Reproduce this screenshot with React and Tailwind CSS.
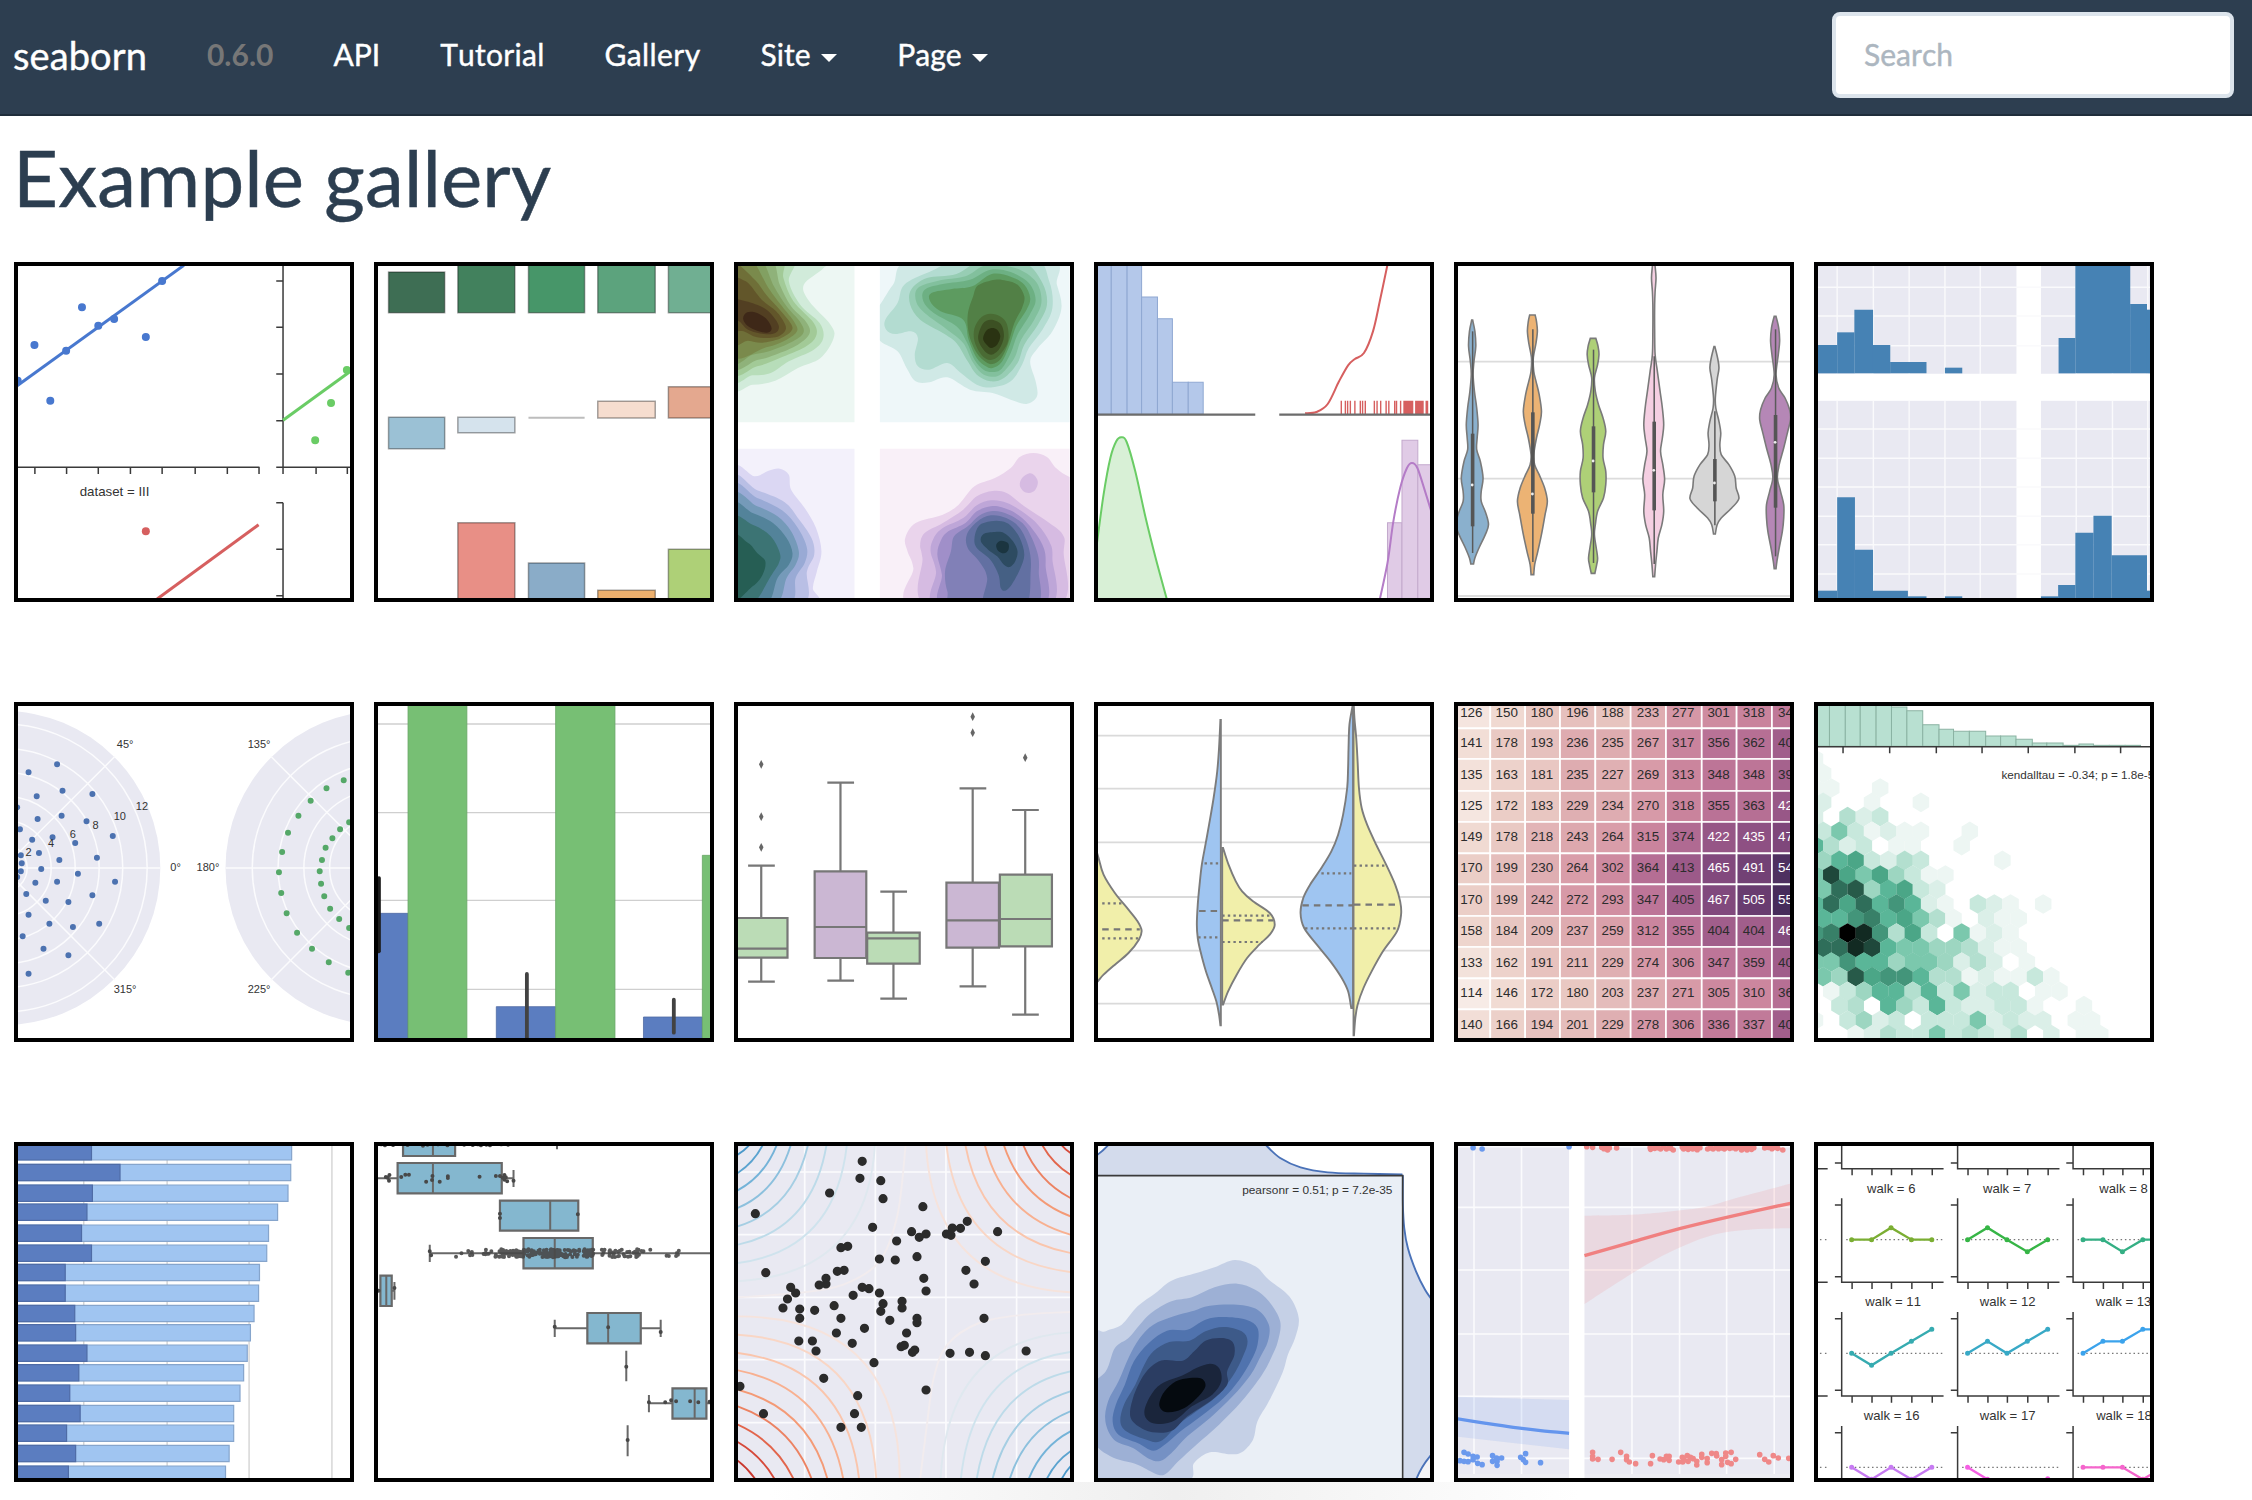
import React from "react";

/* Plot space: 733.2 x 996 units per 332px tile. Left-hand tiles start at x=17.7, right-hand ones at x=812.7. */
const SX = 2.2085;
const SY = 3;

function smooth(p, closed) {
  const n = p.length;
  const at = (i) => (closed ? p[(i + n) % n] : p[Math.max(0, Math.min(n - 1, i))]);
  let d = `M${p[0][0]} ${p[0][1]}`;
  const last = closed ? n : n - 1;
  for (let i = 0; i < last; i++) {
    const a = at(i - 1), b = at(i), c = at(i + 1), e = at(i + 2);
    d += `C${(b[0] + (c[0] - a[0]) / 6).toFixed(1)} ${(b[1] + (c[1] - a[1]) / 6).toFixed(1)} ${(c[0] - (e[0] - b[0]) / 6).toFixed(1)} ${(c[1] - (e[1] - b[1]) / 6).toFixed(1)} ${c[0]} ${c[1]}`;
  }
  return closed ? d + "Z" : d;
}
const pairs = (s) => s.trim().split(/\s+/).map((t) => t.split(",").map(Number));

const Path = ({ d, s = "none", w = 1.5, f = "none", ...r }) => (
  <path d={d} stroke={s} strokeWidth={w} fill={f} vectorEffect="non-scaling-stroke" {...r} />
);
const L = ({ x1, y1, x2, y2, ...r }) => <Path d={`M${x1} ${y1}L${x2} ${y2}`} {...r} />;
const Curve = ({ p, closed, ...r }) => <Path d={smooth(pairs(p), closed)} {...r} />;
const R = ({ x, y, x2, y2, ...r }) => <Path d={`M${x} ${y}H${x2}V${y2}H${x}Z`} {...r} />;
const Dots = ({ p, c, w = 8, o = 1 }) => (
  <Path d={pairs(p).map((q) => `M${q[0]} ${q[1]}h.01`).join("")} s={c} w={w} strokeLinecap="round" opacity={o} />
);
const T = ({ x, y, s = 13, w, c = "#333", children }) => (
  <text
    transform={`translate(${x} ${y}) scale(${SX} ${SY})`}
    fontSize={s}
    fill={c}
    textLength={w ? w / SX : undefined}
    lengthAdjust="spacingAndGlyphs"
    fontFamily='"Liberation Sans", Arial, sans-serif'
  >
    {children}
  </text>
);
const V = ({ xs, a = 22, b = 1022, ...r }) => <Path d={xs.map((x) => `M${x} ${a}V${b}`).join("")} {...r} />;
const H = ({ ys, a = 10, b = 760, ...r }) => <Path d={ys.map((y) => `M${a} ${y}H${b}`).join("")} {...r} />;

function Tile({ right, children }) {
  return (
    <a className="block h-[340px] w-[340px] overflow-hidden border-4 border-black bg-white">
      <svg className="block h-[332px] w-[332px]" viewBox={`${right ? 812.7 : 17.7} 24 733.2 996`} preserveAspectRatio="none">
        {children}
      </svg>
    </a>
  );
}

const AX = "#3a3a3a";

function Anscombe() {
  return (
    <Tile>
      <Path s={AX} d="M10 628H551M603 22V628H760M603 734V1030" />
      <V xs={[55, 125, 195, 266, 336, 409, 480, 550, 603, 676, 745]} a={628} b={648} s={AX} />
      <H ys={[69, 208, 348, 488, 628, 734, 874, 1013]} a={588} b={603} s={AX} />
      <L x1={10} y1={389} x2={384} y2={22} s="#4878cf" w={3} />
      <Dots c="#4878cf" p="17,368 54,261 89,428 124,278 159,148 195,203 230,183 300,237 336,69" />
      <L x1={603} y1={487} x2={752} y2={340} s="#6acc65" w={3} />
      <Dots c="#6acc65" p="744,336 709,435 674,547" />
      <L x1={325} y1={1023} x2={549} y2={800} s="#d65f5f" w={3} />
      <Dots c="#d65f5f" p="300,820" />
      <T x={154} y={713} w={154}>dataset = III</T>
    </Tile>
  );
}

function ColorBars() {
  const b = [
    [836, 42, 960, 164, "#3e6e54"], [989, 10, 1115, 164, "#42815d"], [1145, 10, 1269, 164, "#479669"], [1298, 10, 1425, 164, "#5ca37d"], [1454, 10, 1570, 164, "#70af92"],
    [836, 478, 960, 572, "#9bc1d5"], [989, 478, 1115, 524, "#d5e3ed"], [1298, 430, 1425, 480, "#f6ddcf"], [1454, 386, 1570, 480, "#e4a88f"],
    [989, 794, 1115, 1040, "#e88f86"], [1145, 915, 1269, 1040, "#8aacc8"], [1298, 997, 1425, 1040, "#ecb06e"], [1454, 874, 1570, 1040, "#aed077"],
  ];
  return (
    <Tile right>
      {b.map((r, i) => <R key={i} x={r[0]} y={r[1]} x2={r[2]} y2={r[3]} f={r[4]} s="#000" strokeOpacity={0.35} w={1.5} />)}
      <L x1={1145} y1={479} x2={1269} y2={479} s="#bdbdbd" w={2} />
    </Tile>
  );
}

const kde = [
  { box: [10, 10, 275, 493], bg: "#edf7f3", lv: [
    ["#d1ebda", "10,0 215,0 205,32 163,80 175,130 222,200 229,240 200,300 150,330 100,368 50,380 0,370"],
    ["#b7ddb9", "0,0 137,0 130,70 155,140 198,195 206,240 185,275 130,310 90,345 50,352 0,348"],
    ["#a2ca97", "0,0 112,0 118,60 140,130 185,195 190,235 165,268 110,300 60,325 0,330"],
    ["#8fb27a", "0,0 88,0 110,80 135,145 167,190 176,225 150,260 100,290 60,306 0,315"],
    ["#82a062", "0,0 65,0 97,85 125,145 155,192 162,225 135,253 90,278 50,290 0,300"],
    ["#7a8a4c", "0,0 45,0 85,90 115,145 142,192 148,220 125,245 80,268 0,285"],
    ["#6f6f38", "0,0 20,20 58,70 80,110 110,155 135,198 135,220 110,242 70,254 40,248 0,245"],
    ["#62562a", "0,70 35,70 70,125 102,160 122,200 120,222 100,238 60,238 30,220 0,205"],
    ["#523f22", "0,125 35,130 75,150 95,175 108,205 100,225 75,228 40,215 20,190 0,180"],
    ["#3e2818", "29,182 38,163 60,165 82,185 92,212 82,224 60,218 40,205"],
  ] },
  { box: [331, 10, 750, 493], bg: "#eef7f9", lv: [
    ["#d0e9e6", "410,0 360,80 331,140 300,190 331,248 370,280 390,330 410,370 440,373 480,358 530,395 580,405 620,425 655,438 678,415 675,370 663,310 680,270 712,220 732,150 722,80 700,0"],
    ["#b3dcd1", "520,0 440,42 385,80 370,135 343,185 345,215 365,228 400,220 415,240 408,290 415,325 440,335 480,315 510,345 545,380 580,388 620,370 645,320 660,270 690,215 712,150 705,70 670,0"],
    ["#97cdb4", "560,5 500,48 435,60 400,95 398,140 420,185 470,225 500,255 525,310 545,350 575,370 605,360 635,315 650,260 680,200 700,140 690,75 650,15"],
    ["#82c09d", "565,22 520,55 460,68 415,90 411,130 430,165 480,215 515,255 535,310 555,345 578,356 600,347 628,300 643,245 672,185 688,130 675,70 630,30"],
    ["#6db083", "575,35 530,65 470,78 430,95 427,130 450,165 500,205 522,250 540,305 560,335 580,342 600,332 620,285 635,230 662,170 675,125 660,75 620,42"],
    ["#5d9b60", "578,48 535,85 490,93 445,105 442,130 465,160 515,185 527,245 545,300 565,325 580,330 600,312 618,260 632,205 655,155 663,120 650,80 620,56"],
    ["#528046", "585,65 548,82 537,115 525,170 528,230 545,285 565,312 580,318 598,303 614,258 628,195 645,150 650,115 635,80 610,68"],
    ["#4a6b34", "575,167 555,178 540,210 540,250 555,290 575,306 595,292 614,250 612,200 598,176"],
    ["#3c5023", "576,185 558,198 548,240 560,275 577,290 595,272 605,235 598,198"],
    ["#2a3312", "577,210 565,220 559,243 568,262 577,270 590,260 597,235 590,215"],
  ] },
  { box: [10, 572, 275, 1030], bg: "#f3f1fb", lv: [
    ["#dbd7f3", "0,648 55,655 85,638 110,632 130,650 135,695 165,750 190,810 202,880 192,940 183,990 187,1040 0,1060"],
    ["#b9bfe5", "0,672 60,697 120,732 150,780 180,840 186,890 170,940 160,1040 0,1060"],
    ["#99aad5", "0,695 60,720 115,757 150,810 170,870 165,915 145,960 130,1040 0,1060"],
    ["#759ab9", "0,720 60,745 105,775 135,820 152,880 145,920 125,960 100,1040 0,1060"],
    ["#53839a", "0,750 50,765 95,795 125,840 138,885 130,920 105,960 80,1040 0,1060"],
    ["#3c7474", "0,790 50,800 90,835 110,885 108,915 90,955 50,1040 0,1060"],
    ["#265e54", "0,835 40,855 60,885 78,910 72,950 50,985 0,1025"],
  ] },
  { box: [331, 572, 750, 1030], bg: "#f9f0f8", lv: [
    ["#ead4ec", "790,670 750,657 720,630 700,597 670,585 640,597 620,630 585,660 540,685 505,740 470,770 410,795 387,840 392,880 405,930 412,1050 790,1050"],
    ["#d6bbe2", "580,699 545,715 515,755 470,795 430,825 420,860 425,900 440,1050 720,1050 737,880 735,830 700,790 650,745 612,706"],
    ["#d6bbe2", "661,646 645,660 640,682 648,700 661,705 674,696 680,672 672,652"],
    ["#bea6d8", "577,727 545,742 515,780 470,810 450,840 443,880 455,940 460,1050 700,1050 712,900 705,850 680,800 650,765 612,735"],
    ["#a08fc9", "576,745 545,760 520,795 480,822 465,850 458,890 468,950 474,1050 685,1050 697,920 690,860 660,800 630,765 600,748"],
    ["#8180b7", "576,760 550,773 525,805 495,835 488,880 475,940 480,1000 500,1050 670,1050 682,940 678,880 655,810 630,780 600,762"],
    ["#6270a2", "576,772 545,792 523,830 525,870 550,910 568,960 562,1050 650,1050 664,940 660,870 640,810 610,780"],
    ["#456084", "576,790 550,803 540,840 545,870 575,905 593,950 598,990 608,998 622,980 640,935 650,890 640,840 620,803 600,790"],
    ["#2d4b61", "585,822 560,828 554,850 570,875 590,895 605,920 618,927 630,910 635,880 625,850 605,825"],
    ["#1b3540", "598,848 588,860 592,878 605,886 615,875 614,855"],
  ] },
];

function CubehelixKde() {
  return (
    <Tile>
      {kde.map((k, i) => (
        <g key={i} clipPath={`url(#kde-clip-${i})`}>
          <clipPath id={`kde-clip-${i}`}>
            <path d={`M${k.box[0]} ${k.box[1]}H${k.box[2]}V${k.box[3]}H${k.box[0]}Z`} />
          </clipPath>
          <rect x="0" y="0" width="800" height="1040" fill={k.bg} />
          {k.lv.map((l, j) => <Curve key={j} closed p={l[1]} f={l[0]} />)}
        </g>
      ))}
    </Tile>
  );
}

function Distplot() {
  const e = [805, 842, 877, 909, 944, 977, 1012, 1045];
  const t = [10, 10, 10, 117, 182, 373, 373];
  return (
    <Tile right>
      {t.map((y, i) => <R key={i} x={e[i]} y={y} x2={e[i + 1]} y2={469} f="#b4c8ea" s="#8fa8d2" w={1} />)}
      <Curve p="1270,466 1295,462 1320,438 1345,370 1365,322 1380,303 1400,285 1420,220 1435,130 1452,20" s="#d65f5f" w={2} />
      <V xs={[1350, 1359, 1364, 1370, 1380, 1392, 1397, 1403, 1423, 1429, 1437, 1449, 1455, 1468, 1472, 1481]} a={428} b={468} s="#d65f5f" w={1.4} />
      <Path d="M1487 428H1509V468H1487ZM1513 428H1532V468H1513ZM1536 428H1542V468H1536Z" f="#d65f5f" />
      <Path d="M805 470H1160M1213 470H1560" s="#6c6c6c" w={2.4} />
      <Path d={smooth(pairs("810,860 825,710 840,600 853,550 864,538 876,552 895,640 918,780 940,900 966,1030")) + "L800 1030Z"} f="#d8f0d6" s="#6acc65" w={2} />
      <R x={1452} y={794} x2={1484} y2={1030} f="#e0cbe6" s="#c3a9cd" w={1} />
      <R x={1484} y={547} x2={1519} y2={1030} f="#e0cbe6" s="#c3a9cd" w={1} />
      <R x={1519} y={620} x2={1560} y2={1030} f="#e0cbe6" s="#c3a9cd" w={1} />
      <Curve p="1434,1030 1452,915 1465,790 1480,690 1495,630 1506,615 1518,630 1535,700 1552,775" s="#b47cc7" w={2} />
    </Tile>
  );
}

const violins = [
  [49, "#8ab0cd", "186,1 220,6 265,8 310,4 350,2 400,5 450,10 500,13 540,11 575,10 610,18 660,24 700,20 730,20 765,30 800,36 830,29 870,15 900,6 918,3", 527, 805, 220, 885, 681],
  [182, "#ecb374", "171,6 190,9 220,11 255,8 300,2 340,3 370,8 410,15 460,20 500,16 540,9 590,3 620,5 650,15 690,27 730,33 770,28 830,20 880,12 920,5 950,3", 463, 767, 214, 912, 708],
  [316, "#aed077", "241,6 265,11 290,13 320,10 360,3 400,5 440,12 480,22 520,28 560,23 600,22 640,28 680,28 720,23 760,10 800,5 830,3 870,7 900,10 920,8 946,4", 505, 703, 275, 915, 609],
  [450, "#f5cfe2", "0,1 25,3 60,5 100,3 140,2 220,2 290,3 340,8 400,14 450,19 500,22 540,19 580,15 620,20 665,24 710,20 760,22 800,18 840,10 880,7 920,4 956,2", 491, 757, 295, 918, 637],
  [584, "#d6d6d6", "266,1 300,7 330,10 365,6 420,2 450,3 490,10 525,14 560,12 590,15 620,32 655,45 690,48 722,54 750,38 780,15 800,6 828,2", 603, 730, 460, 802, 675],
  [718, "#b587b6", "175,2 210,8 250,10 290,7 350,2 390,8 420,22 455,32 485,34 520,28 570,19 620,9 660,5 700,12 740,19 780,19 820,16 870,9 910,4 932,2", 471, 749, 214, 895, 553],
];

function Violins() {
  return (
    <Tile>
      <H ys={[311, 662, 1014]} s="#dcdcdc" w={1.8} />
      {violins.map((v, i) => {
        const p = pairs(v[2]);
        const l = p.map((q) => [v[0] - q[1], q[0]]);
        const r = p.map((q) => [v[0] + q[1], q[0]]).reverse();
        return (
          <g key={i}>
            <Path d={smooth(l) + "L" + smooth(r).slice(1) + "Z"} f={v[1]} s="#7a7a7a" w={1.6} />
            <V xs={[v[0] + 1]} a={v[5]} b={v[6]} s="#5a5a5a" w={1.5} />
            <V xs={[v[0] + 1]} a={v[3]} b={v[4]} s="#555" w={3.6} />
            <Dots p={`${v[0]},${v[7]}`} c="#eee" w={2.8} />
          </g>
        );
      })}
    </Tile>
  );
}

function FacetHist() {
  const bars = [
    [805, 855, 261, 346], [855, 893, 223, 346], [893, 934, 155, 346], [934, 972, 261, 346], [972, 1052, 312, 346], [1093, 1131, 329, 346],
    [1344, 1381, 240, 346], [1381, 1502, 10, 346], [1502, 1539, 138, 346], [1539, 1560, 155, 346],
    [805, 855, 998, 1030], [855, 894, 718, 1030], [894, 934, 875, 1030], [934, 1011, 998, 1030], [1011, 1052, 1015, 1030], [1093, 1131, 1015, 1030],
    [1305, 1343, 1015, 1030], [1343, 1381, 981, 1030], [1381, 1421, 824, 1030], [1421, 1461, 773, 1030], [1461, 1539, 892, 1030], [1539, 1560, 998, 1030],
  ];
  return (
    <Tile right>
      <Path f="#e9e9f2" d="M805 10H1251V347H805ZM1305 10H1560V347H1305ZM805 428H1251V1030H805ZM1305 428H1560V1030H1305Z" />
      <V xs={[855, 935, 1014, 1093, 1171, 1383, 1463, 1541]} s="#fafafc" w={1.4} />
      <H ys={[88, 174, 263, 513, 601, 687, 775, 860, 948]} a={805} b={1560} s="#fafafc" w={1.5} />
      <R x={805} y={348} x2={1560} y2={427} f="#fff" />
      {bars.map((b, i) => <R key={i} x={b[0]} y={b[2]} x2={b[1] + 0.3} y2={b[3]} f="#4682b4" />)}
    </Tile>
  );
}

function Polar() {
  const ring = (cx, r, extra) => (
    <ellipse key={cx + "-" + r} cx={cx} cy="510" rx={r} ry={(r * SY) / SX} vectorEffect="non-scaling-stroke" {...extra} />
  );
  const g = { fill: "none", stroke: "#fbfbfd", strokeWidth: 1.5 };
  return (
    <Tile>
      {ring(-15, 347, { fill: "#e9e9f2" })}
      {ring(823, 347, { fill: "#e9e9f2" })}
      {[53, 106, 159, 212, 264, 318].map((r) => ring(-15, r, g))}
      {[58, 117, 174, 231, 288].map((r) => ring(823, r, g))}
      <Path s="#fbfbfd" w={1.5} d="M-15 510H332M476 510H823M-15 510L232 175M-15 510L232 847M823 510L576 175M823 510L576 847" />
      <Dots c="#4c72b0" w={6} p="104,199 41,223 116,278 182,288 59,295 16,328 61,363 114,353 169,370 227,414 22,394 49,425 94,418 144,435 24,472 64,465 192,479 109,486 26,496 24,520 69,513 150,527 232,551 104,551 56,554 16,537 36,588 79,608 129,612 182,592 41,650 87,677 139,687 197,677 28,715 74,752 129,772 41,827" />
      <Dots c="#55a868" w={6} p="737,247 699,271 664,308 637,353 614,404 601,462 594,523 599,585 611,646 634,704 667,752 704,793 747,824 749,373 729,394 712,421 697,449 689,486 684,520 687,557 694,595 707,632 727,663 749,690" />
      <T x={236} y={151} s={11}>45°</T>
      <T x={525} y={151} s={11}>135°</T>
      <T x={354} y={520} s={11}>0°</T>
      <T x={412} y={520} s={11}>180°</T>
      <T x={229} y={885} s={11}>315°</T>
      <T x={525} y={885} s={11}>225°</T>
      {[[34, 475, 2], [84, 446, 4], [132, 420, 6], [182, 393, 8], [229, 366, 10], [278, 335, 12]].map((t) => (
        <T key={t[2]} x={t[0]} y={t[1]} s={11}>{t[2]}</T>
      ))}
    </Tile>
  );
}

function Barplot() {
  return (
    <Tile right>
      <H ys={[78, 344, 607, 874]} a={805} b={1560} s="#cfcfcf" w={1.4} />
      {[[805, 879, 646], [1074, 1205, 926], [1399, 1529, 957]].map((b) => <R key={b[0]} x={b[0]} y={b[2]} x2={b[1]} y2={1030} f="#5b7dc0" s="#4f6ba3" w={0.8} />)}
      {[[879, 1009, 10], [1205, 1336, 10], [1529, 1570, 472]].map((b) => <R key={b[0]} x={b[0]} y={b[2]} x2={b[1]} y2={1030} f="#77bf74" s="#68a666" w={0.8} />)}
      <Path d="M815 540V760" s="#1d1d1d" w={3.6} strokeLinecap="round" />
      <Path d="M1141.5 828V1040M1466 905V1004" s="#424242" w={3.8} strokeLinecap="round" />
    </Tile>
  );
}

function Boxplots() {
  const b = [
    [5, 127, 660, 779, 752, 503, 851, 69, "#bbdcb6"], [187, 301, 520, 780, 687, 254, 848, 244, "#cbb7d3"], [303, 419, 704, 797, 721, 581, 902, 361, "#bbdcb6"],
    [478, 594, 554, 749, 667, 271, 865, 536, "#cbb7d3"], [596, 711, 530, 745, 663, 336, 950, 652, "#bbdcb6"],
  ];
  return (
    <Tile>
      {b.map((q, i) => (
        <g key={i}>
          <Path s="#777" w={2.2} d={`M${q[7]} ${q[5]}V${q[6]}M${q[7] - 29} ${q[5]}h59M${q[7] - 29} ${q[6]}h59`} />
          <R x={q[0]} y={q[2]} x2={q[1]} y2={q[3]} f={q[8]} s="#777" w={2.2} />
          <L x1={q[0]} y1={q[4]} x2={q[1]} y2={q[4]} s="#777" w={2.2} />
        </g>
      ))}
      {pairs("69,199 69,356 69,448 536,56 536,104 652,179").map((q, i) => (
        <Path key={i} d={`M${q[0]} ${q[1] - 13}l5 13l-5 13l-5 -13Z`} f="#666" />
      ))}
    </Tile>
  );
}

function SplitViolins() {
  const half = (c, s, sign, f) => {
    const p = pairs(s).map((q) => [c + sign * q[1], q[0]]);
    return <Path d={`M${c} ${p[0][1]}L${smooth(p).slice(1)}L${c} ${p[p.length - 1][1]}Z`} f={f} s="#7c7c7c" w={1.9} />;
  };
  const B = "#9fc5f1", Y = "#f1efaa";
  return (
    <Tile right>
      <H ys={[113, 272, 433, 597, 758, 917]} a={805} b={1560} s="#dadada" w={1.8} />
      <Path d={smooth(pairs("805,440 814,480 825,530 850,585 880,635 900,670 909,698 903,725 880,765 850,800 825,830 814,847 800,870"))} f={Y} s="#7c7c7c" w={1.9} />
      {half(1084, "66,1 150,4 220,8 300,16 380,26 440,34 500,42 560,47 620,51 680,53 720,51 760,45 820,33 870,20 910,10 950,4 982,1", -1, B)}
      {half(1087, "450,2 500,14 550,30 580,44 610,68 645,105 680,116 710,105 740,82 780,55 830,32 880,13 920,2", 1, Y)}
      {half(1376, "0,0 22,1 80,8 150,10 210,11 270,13 350,22 410,33 460,48 510,70 560,95 600,110 645,116 690,108 740,80 790,50 840,25 880,11 930,4", -1, B)}
      {half(1377, "0,0 60,2 120,6 190,9 270,12 330,18 380,30 440,50 500,72 560,92 610,103 650,105 700,96 760,65 820,40 870,22 920,9 960,4 1012,1", 1, Y)}
      <Path s="#777" w={2.2} strokeDasharray="2.4 3.2" d="M822 616H868M822 721H902M1048 496H1084M1034 718H1084M1087 653H1194M1087 732H1176M1306 526H1372M1270 691H1376M1378 503H1450M1378 691H1470" />
      <Path s="#777" w={2.2} strokeDasharray="6.5 5" d="M822 694H905M1036 639H1084M1087 667H1200M1264 622H1376M1378 620H1478" />
    </Tile>
  );
}

/* The last column is only half inside the tile, so its labels carry their first two digits. */
const heat = [
  "126 150 180 196 188 233 277 301 318 342", "141 178 193 236 235 267 317 356 362 404", "135 163 181 235 227 269 313 348 348 396",
  "125 172 183 229 234 270 318 355 363 420", "149 178 218 243 264 315 374 422 435 472", "170 199 230 264 302 364 413 465 491 548",
  "170 199 242 272 293 347 405 467 505 559", "158 184 209 237 259 312 355 404 404 463", "133 162 191 211 229 274 306 347 359 407",
  "114 146 172 180 203 237 271 305 310 362", "140 166 194 201 229 278 306 336 337 405",
].map((r) => r.split(" ").map(Number));
const ramp = [[114, 247, 235, 230], [145, 241, 220, 212], [180, 233, 200, 194], [236, 222, 171, 176], [272, 215, 153, 167], [315, 202, 132, 157], [350, 188, 116, 151], [405, 161, 94, 139], [435, 142, 80, 131], [470, 128, 72, 124], [505, 105, 60, 112], [548, 78, 48, 96], [560, 70, 42, 90]];
function heatColor(v) {
  let i = 1;
  while (i < ramp.length - 1 && v > ramp[i][0]) i++;
  const a = ramp[i - 1], b = ramp[i];
  const t = (v - a[0]) / (b[0] - a[0]);
  return `rgb(${[1, 2, 3].map((k) => Math.round(a[k] + (b[k] - a[k]) * t)).join(",")})`;
}

function Heatmap() {
  const cx = [5, 89, 166, 243, 321, 399, 477, 556, 633, 711, 790];
  const ry = [0, 91, 183, 279, 372, 466, 559, 654, 747, 841, 934, 1040];
  const by = [57, 148, 243, 335, 430, 523, 618, 711, 806, 898, 993];
  return (
    <Tile>
      {heat.map((row, r) => row.map((v, c) => (
        <g key={r + "-" + c}>
          <R x={cx[c]} y={ry[r]} x2={cx[c + 1]} y2={ry[r + 1]} f={heatColor(v)} s="#fff" w={1.7} />
          <T x={22.5 + c * 78} y={by[r]} s={13.4} c={v > 415 ? "#fff" : "#2c2c2c"}>{c === 9 ? String(v).slice(0, 2) : v}</T>
        </g>
      )))}
    </Tile>
  );
}

const hexPal = { 1: "#edf6f3", 2: "#dbefe8", 3: "#c7e8dc", 4: "#b3dfcf", 5: "#9dd6c1", 6: "#7bc8ad", 7: "#5ab698", 8: "#4ba687", 9: "#43957a", a: "#388068", b: "#2f6e5a", c: "#275a49", d: "#1f483b", e: "#122a22", f: "#000" };
const hexRows = [
  [183, 0, "1"], [226, 1, "1"], [270, 0, "11..1"], [313, 1, "2..1..1"], [356, 0, "2.423"], [400, 1, "3631211..1"], [443, 0, "7423.11..1"], [487, 1, "5783243....1"],
  [531, 0, "6d8685311"], [574, 1, "6bc57832"], [618, 0, "7b8b79721.321.1"], [661, 1, "779a78641.211"], [705, 0, "9afe9483.6121"], [749, 1, "bbed766554211"],
  [792, 0, "669775665242.1"], [836, 1, "65c899744121131"], [880, 0, ".135774736233.11"], [923, 1, ".34.7537322331..1"], [967, 0, "1.3523.33362322.11"], [1010, 1, "..12433634324.2.11"],
];

function Hexbin() {
  const e = [800, 838, 873, 906, 941, 975, 1009, 1044, 1080, 1112, 1147, 1183, 1216, 1250, 1286, 1318, 1354, 1389, 1421, 1456, 1491, 1525];
  const t = [10, 22, 22, 22, 22, 27, 38, 80, 94, 100, 100, 114, 114, 124, 135, 135, 142, 138, 142, 142, 142];
  return (
    <Tile right>
      {hexRows.map((r) => [...r[2]].map((c, i) => c !== "." && (
        <path key={r[0] + "-" + i} d={`M${806 + (r[1] ? 18 : 0) + 36 * i} ${r[0] - 29.4}l18.2 14.6v29.6l-18.2 14.6l-18.2 -14.6v-29.6Z`} fill={hexPal[c]} />
      )))}
      {t.map((y, i) => <R key={i} x={e[i]} y={y} x2={e[i + 1]} y2={145} f="#b8e0d1" s="#8bb3a3" w={1} />)}
      <H ys={[146]} a={805} b={1560} s={AX} />
      <V xs={[868, 971, 1074, 1175, 1277, 1380, 1481]} a={146} b={166} s={AX} />
      <T x={1218} y={243} s={11.7}>kendalltau = -0.34; p = 1.8e-5</T>
    </Tile>
  );
}

function CrashBars() {
  const top = [10, 79, 141, 198, 261, 321, 379, 441, 502, 560, 621, 680, 741, 802, 861, 922, 984];
  const d = [180, 243, 182, 170, 158, 180, 122, 122, 143, 145, 170, 152, 132, 155, 125, 145, 129];
  const l = [622, 620, 614, 591, 571, 567, 551, 549, 539, 531, 524, 516, 508, 494, 494, 484, 476];
  return (
    <Tile>
      <V xs={[163, 347, 528, 711]} s="#ccc" w={1.2} />
      {top.map((y, i) => (
        <g key={i}>
          <R x={0} y={y} x2={l[i]} y2={i ? y + 49 : 66} f="#a0c5f1" s="#86a5cc" w={1.2} />
          <R x={0} y={y} x2={d[i]} y2={i ? y + 49 : 66} f="#5b7dc0" s="#4f6ca6" w={1.2} />
        </g>
      ))}
    </Tile>
  );
}

function planetDots() {
  let s = 7;
  const rnd = () => (s = (s * 16807) % 2147483647) / 2147483647;
  const out = [];
  const add = (n, a, b) => {
    for (let i = 0; i < n; i++) out.push(`${Math.round(a + rnd() * (b - a))},${Math.round(334 + rnd() * 24)}`);
  };
  add(16, 985, 1080); add(50, 1080, 1140); add(50, 1140, 1200); add(34, 1195, 1232); add(40, 1235, 1290); add(20, 1305, 1345); add(22, 1345, 1395); add(8, 1395, 1490);
  return out.join(" ");
}

function Planets() {
  const S = "#686868";
  const box = (x, x2, y, y2, m) => (
    <g>
      <R x={x} y={y} x2={x2} y2={y2} f="#84b7cf" s={S} w={2.2} />
      <L x1={m} y1={y} x2={m} y2={y2} s={S} w={2} />
    </g>
  );
  return (
    <Tile right>
      <Path s={S} w={2} d="M805 121H856M1086 121H1112M1112 96V147M927 346H1560M927 320V372M843 458H849M849 432V485M1203 571H1437M1203 545V597M1437 545V597M1361 638V730M1411 796H1560M1411 771V823M1364 862V955M1208 10V34" />
      {box(868, 983, 0, 54, 934)}
      {box(856, 1086, 75, 166, 934)}
      {box(1082, 1255, 188, 278, 1193)}
      {box(1134, 1287, 300, 391, 1203)}
      {box(818, 843, 413, 504, 831)}
      {box(1275, 1393, 525, 616, 1321)}
      {box(1463, 1538, 751, 842, 1512)}
      <Dots c="#484848" w={4} p="820,19 828,22 838,18 846,21 878,21 905,18 912,23 922,20 945,19 966,22 974,18 1003,20 1012,18 1022,21 1033,19 1040,22 1052,20 1060,22 1070,18 1085,19 1100,20" />
      <Dots c="#484848" w={4} p="838,111 834,119 837,128 830,117 864,117 873,110 881,110 919,131 933,114 932,126 949,131 967,115 967,120 1037,116 1073,114 1082,114 1092,111 1095,118 1092,125 1098,130 1088,119 1112,128 1082,227 1082,240 1254,229 814,458 849,450 1203,566 1321,568 1437,582 1361,686 1364,906 1411,793 1447,793 1460,787 1471,790 1502,790 1520,793 1545,791 927,340 930,352" />
      <Dots c="#484848" w={4} o={0.9} p={planetDots()} />
    </Tile>
  );
}

function ContourScatter() {
  const blue = ["#4a98c9", "#5ba3cf", "#74b3d8", "#8cc0dd", "#a5cee3", "#bddbe9", "#cfe3ed", "#dfe8ef"];
  const red = ["#c9382f", "#d6493a", "#e2654c", "#ec8262", "#f49a76", "#f8b090", "#fac5ac", "#f9d6c5", "#f6e3dc"];
  const tl = [[50, 42], [105, 72], [157, 103], [210, 134], [265, 172], [320, 213], [375, 258], [430, 320]];
  const tr = [[45, 733], [110, 690], [180, 648], [235, 605], [290, 563], [345, 520], [402, 478], [463, 433]];
  const bl = [[968, 55], [912, 98], [860, 140], [805, 180], [755, 215], [697, 250], [645, 285], [590, 323], [535, 375]];
  const br = [[985, 733], [940, 700], [880, 660], [820, 618], [760, 580], [700, 545], [642, 510], [583, 465]];
  /* Level curve from the side edge to the top or bottom edge; the bulge k grows away from the corner. */
  const arc = (ex, ey, y, x, s, i) => {
    const k = 0.58 + 0.052 * i;
    return <Path key={s + i} s={s} w={1.9} d={`M${ex} ${y}Q${ex + (x - ex) * k} ${ey + (y - ey) * k} ${x} ${ey}`} />;
  };
  return (
    <Tile>
      <rect x="0" y="0" width="800" height="1040" fill="#e9e9f2" />
      <V xs={[165, 321, 477, 633]} s="#fbfbfd" w={1.7} />
      <H ys={[102, 290, 478, 665, 854]} s="#fbfbfd" w={1.7} />
      {tl.map((a, i) => arc(17, 22, a[0], a[1], blue[i], i))}
      {tr.map((a, i) => arc(752, 22, a[0], a[1], red[Math.min(8, i + 1)], i))}
      {bl.map((a, i) => arc(17, 1022, a[0], a[1], red[i], i))}
      {br.map((a, i) => arc(752, 1022, a[0], a[1], blue[i], i))}
      <Curve p="17,478 150,465 250,440 330,370 370,230 388,20" s="#f2ecee" w={1.9} />
      <Curve p="420,1022 435,860 450,720 480,620 550,555 650,530 752,522" s="#f2ecee" w={1.9} />
      <Dots c="#2b2b2b" w={9.2} p="292,70 287,121 333,128 220,165 338,182 426,206 56,227 315,268 524,250 591,281 401,281 433,288 418,298 478,288 491,270 509,271 488,292 368,309 245,329 260,325 330,363 365,366 413,356 564,370 79,404 237,400 252,397 521,397 212,421 197,441 212,438 428,421 539,438 134,448 145,465 127,483 292,448 307,452 330,465 433,459 272,472 117,510 154,513 187,517 230,503 338,497 333,520 380,490 380,510 154,541 245,541 353,547 413,541 413,554 561,541 297,571 235,585 390,585 152,609 182,609 270,616 378,626 385,622 408,636 403,643 190,639 486,646 529,643 564,653 654,639 318,674 207,721 22,745 433,756 282,773 74,827 275,827 245,868 290,868" />
    </Tile>
  );
}

const joint = [
  ["#c5d0e6", "790,620 830,580 865,560 900,505 940,465 975,428 1030,405 1070,388 1115,366 1160,385 1190,425 1235,475 1256,540 1248,600 1232,650 1220,705 1190,790 1165,850 1155,905 1130,943 1105,949 1060,943 1025,975 1000,1035 790,1050"],
  ["#9db0d5", "790,760 830,700 850,630 880,600 905,560 930,525 975,490 1020,478 1070,448 1120,437 1160,455 1190,490 1215,550 1210,610 1195,660 1175,710 1130,790 1080,860 1030,920 990,970 965,1005 945,1010 900,980 840,955 800,900"],
  ["#7591c4", "829,850 835,790 858,730 880,660 905,600 935,560 980,535 1020,520 1060,503 1120,500 1165,515 1190,560 1188,610 1170,660 1150,710 1110,775 1060,840 1010,895 975,945 950,969 925,962 890,930 848,905"],
  ["#5073ae", "845,850 852,800 872,740 892,670 925,615 965,578 1010,575 1050,545 1090,537 1140,545 1165,570 1165,620 1150,670 1125,725 1090,780 1040,835 995,880 965,915 935,938 900,915 858,890"],
  ["#3d5a89", "862,850 870,800 895,740 915,680 935,640 970,612 1015,608 1050,580 1090,567 1130,580 1143,610 1133,655 1110,715 1075,775 1030,820 990,860 950,910 915,903 875,880"],
  ["#2b3d62", "885,840 890,780 912,715 935,680 960,666 1000,668 1025,640 1050,608 1085,600 1110,612 1114,650 1098,700 1098,740 1065,785 1010,835 980,875 950,884 915,875"],
  ["#1a253b", "915,822 928,775 952,738 1000,712 1030,690 1060,677 1080,690 1085,730 1065,770 1020,805 985,845 950,858 925,850"],
  ["#050a0f", "949,790 960,760 985,730 1015,720 1042,722 1050,745 1035,775 1010,805 985,820 962,822 950,810"],
];

function JointKde() {
  return (
    <Tile right>
      <Path d={"M805 112L805 10H1175L" + smooth(pairs("1184,22 1215,60 1260,88 1320,103 1400,107 1485,109")).slice(1) + "V112Z"} f="#d3dbec" />
      <Path d="M800 60Q820 45 836 20H800Z" f="#fff" s="#4a72b8" w={1.9} />
      <Curve p="1178,12 1184,22 1215,60 1260,88 1320,103 1400,107 1485,109" s="#4a72b8" w={1.9} />
      <R x={805} y={113} x2={1485} y2={1030} f="#eaeff6" />
      {joint.map((l) => <Curve key={l[0]} closed p={l[1]} f={l[0]} />)}
      <Path d={smooth(pairs("1486,112 1486,200 1489,270 1497,330 1515,400 1535,455 1555,495")) + "V1040H1486Z"} f="#d3dbec" />
      <Curve p="1486,112 1486,200 1489,270 1497,330 1515,400 1535,455 1555,495" s="#4a72b8" w={1.9} />
      <Path d="M1514 1030Q1525 985 1555 940V1040Z" f="#f4f4f6" s="#4a72b8" w={1.9} />
      <Path d="M805 113H1485.5V1030" s={AX} w={1.6} />
      <T x={1131} y={168} s={11.7} w={332}>pearsonr = 0.51; p = 7.2e-35</T>
    </Tile>
  );
}

function Logistic() {
  return (
    <Tile>
      <rect x="0" y="0" width="800" height="1008" fill="#e9e9f2" />
      <V xs={[53, 158, 402, 507, 611, 716]} b={1008} s="#fbfbfd" w={1.6} />
      <H ys={[26, 208, 396, 588, 775, 961]} s="#fbfbfd" w={1.6} />
      <rect x="0" y="1008" width="800" height="30" fill="#ececf2" />
      <R x={263} y={10} x2={297} y2={1030} f="#fff" />
      <Path d="M10 776L263 786V934L10 895Z" f="#6495ed" opacity={0.15} />
      <Curve p="10,841 80,856 140,868 200,878 263,886" s="#6495ed" w={3.2} />
      <Path d={smooth(pairs("297,233 400,230 480,221 560,208 640,177 752,137")) + "L" + smooth(pairs("752,271 680,273 600,285 540,310 460,360 380,425 297,498")).slice(1) + "Z"} f="#f08080" opacity={0.16} />
      <Curve p="297,353 400,313 507,272 611,238 752,196" s="#f08080" w={3.4} />
      <Dots c="#6495ed" w={5.6} o={0.95} p="51,29 71,33 263,26 31,943 40,948 22,968 31,970 40,971 51,955 60,957 51,965 61,976 71,980 94,953 103,960 114,960 94,970 104,970 104,982 156,958 162,965 167,973 167,947 200,974" />
      <Dots c="#f08080" w={5.6} o={0.92} p="302,26 315,28 335,28 340,32 343,28 348,36 352,30 368,30 442,29 443,34 452,31 460,29 465,33 472,27 478,33 484,29 488,31 493,36 513,28 516,33 522,29 526,34 531,30 536,33 541,29 546,35 552,29 569,33 575,30 581,33 588,28 593,32 600,30 606,33 612,28 618,31 625,29 631,32 636,26 641,30 644,36 650,28 656,36 660,29 666,34 671,29 695,30 703,28 711,32 718,28 724,31 735,36 315,943 315,955 315,963 327,964 358,964 377,943 390,955 390,965 396,972 410,977 443,977 447,953 464,963 472,965 478,955 484,967 484,955 505,972 513,958 516,965 514,972 524,953 526,970 531,958 537,962 545,970 545,981 556,949 556,958 568,962 568,974 578,946 588,947 589,954 600,965 600,980 609,945 609,955 613,973 621,943 621,977 631,964 684,950 695,964 704,972 714,953 725,960 748,961" />
    </Tile>
  );
}

const walks = [
  [865, 305, "walk = 6", 921, [0, 0, 1, 0, 0], "#7bae33"], [1121, 305, "walk = 7", 1177, [0, 1, 0, -1, 0], "#36b546"], [1376, 305, "walk = 8", 1434, [0, 0, -1, 0, 0], "#34af84"],
  [865, 646, "walk = 11", 917, [0, -1, 0, 1, 2], "#36abb0"], [1121, 646, "walk = 12", 1170, [0, 1, 0, 1, 2], "#38a9c6"], [1376, 646, "walk = 13", 1426, [0, 1, 1, 2, 2], "#3ba3ec"],
  [865, 988, "walk = 16", 914, [0, -1, 0, -1, 0], "#c77bf2"], [1121, 988, "walk = 17", 1170, [0, -1, -2, -2, -0.95], "#f560e4"], [1376, 988, "walk = 18", 1427, [0, 0, 0, -1, 0], "#f565cc"],
];

function Walks() {
  const off = [23, 67, 110, 155, 200];
  return (
    <Tile right>
      {[865, 1121, 1376].map((x) => (
        <Path key={x} s={AX} d={`M${x} 10V92h225M${x - 15} 75h15` + off.map((o) => `M${x + o} 92v20`).join("")} />
      ))}
      <Path s={AX} d="M805 92H834M805 433H834M805 774H834" />
      <Path s="#777" w={1.4} strokeDasharray="1.5 3.5" d="M817 305H832M817 646H832M817 988H832" />
      {walks.map((w) => {
        const [x, y] = w;
        const pts = w[4].map((v, i) => `${x + off[i] - 1},${y - v * 36}`);
        return (
          <g key={w[2]}>
            <Path s={AX} d={`M${x} ${y - 124}V${y + 128}h225M${x - 15} ${y - 104}h15M${x - 15} ${y + 111}h15` + off.map((o) => `M${x + o} ${y + 128}v20`).join("")} />
            <Path s="#777" w={1.4} strokeDasharray="1.5 2.8" d={`M${x + 10} ${y}H${x + 225}`} />
            <Path d={"M" + pts.join("L")} s={w[5]} w={2.4} />
            <Dots p={pts.join(" ")} c={w[5]} w={5} />
            <T x={w[3]} y={y - 141} s={13.1}>{w[2]}</T>
          </g>
        );
      })}
    </Tile>
  );
}

const Caret = () => <span className="ml-[3px] inline-block border-x-8 border-t-8 border-x-transparent border-t-white align-middle" />;

export default function App() {
  return (
    <div className="flex h-[1500px] w-[2252px] flex-col overflow-hidden bg-white font-['Lato',sans-serif] text-[#2c3e50] [font-kerning:none]">
      <nav className="flex h-[116px] shrink-0 items-start border-b-2 border-[#1f2d3b] bg-[#2d3e50] pl-[13px] pr-[18px] text-[30px] leading-[40px] text-white [-webkit-text-stroke-width:0.4px]">
        <a className="mr-[30px] mt-[35px] pr-[30px] text-[38px] tracking-[0.1px]">seaborn</a>
        <span className="mr-[60px] mt-[34px] font-bold text-[#777] [-webkit-text-stroke-width:0px]">0.6.0</span>
        <div className="mt-[34px] flex gap-[60px]">
          <a>API</a>
          <a className="tracking-[0.25px]">Tutorial</a>
          <a className="tracking-[0.4px]">Gallery</a>
          <a>Site <Caret /></a>
          <a>Page <Caret /></a>
        </div>
        <div className="ml-auto mt-[12px] flex h-[86px] w-[402px] items-center rounded-lg border-4 border-[#dce4ec] bg-white pb-[2px] pl-[28px] text-[#acb6c0]">Search</div>
      </nav>
      <h1 className="h-[146px] shrink-0 pl-[13px] pt-[18px] text-[78px] leading-[86px] tracking-[0.15px] [-webkit-text-stroke-width:0.5px]">Example gallery</h1>
      <main className="grid shrink-0 grid-cols-[repeat(6,340px)] gap-x-5 gap-y-[100px] pl-[14px]">
        <Anscombe />
        <ColorBars />
        <CubehelixKde />
        <Distplot />
        <Violins />
        <FacetHist />
        <Polar />
        <Barplot />
        <Boxplots />
        <SplitViolins />
        <Heatmap />
        <Hexbin />
        <CrashBars />
        <Planets />
        <ContourScatter />
        <JointKde />
        <Logistic />
        <Walks />
      </main>
      <div className="ml-[770px] w-[810px] flex-1 bg-linear-to-r from-white via-[#efefef] to-white" />
    </div>
  );
}
